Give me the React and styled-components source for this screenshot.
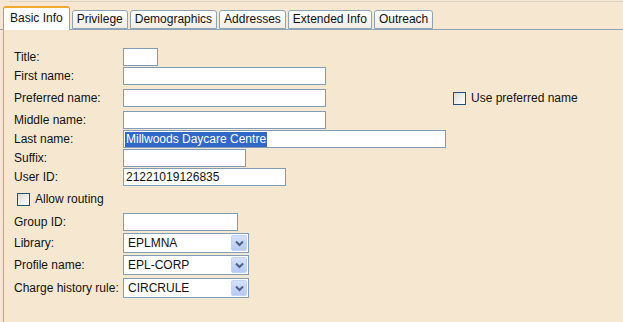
import React from 'react';
import styled, { createGlobalStyle } from 'styled-components';

const GlobalStyle = createGlobalStyle`
  html, body {
    margin: 0;
    padding: 0;
    background: #f6e8d0;
  }
  body {
    font-family: 'Liberation Sans', Arial, sans-serif;
    font-size: 12px;
    color: #111;
  }
`;

const Screen = styled.div`
  width: 623px;
  height: 322px;
  overflow: hidden;
  background: #f6e8d0;
  display: flex;
  flex-direction: column;
`;

const TopRule = styled.div`
  height: 1px;
  margin: 1px 0 0 9px;
  background: #dcd3c3;
`;

const TabBar = styled.div`
  display: flex;
  align-items: flex-end;
  gap: 2px;
  margin-top: 5px;
  padding-left: 3px;
  border-bottom: 1px solid #8fa3b6;
  height: 22px;
`;

const Tab = styled.div`
  box-sizing: border-box;
  height: ${({ active }) => (active ? '24px' : '19px')};
  margin-bottom: ${({ active }) => (active ? '-1px' : '0')};
  padding: ${({ active }) => (active ? '3px 6px 0' : '1px 4px 0')};
  border: 1px solid #8fa3b6;
  border-bottom: ${({ active }) => (active ? 'none' : '1px solid #8fa3b6')};
  border-top: ${({ active }) => (active ? '2px solid #f0a830' : '1px solid #8fa3b6')};
  border-radius: 3px 3px 0 0;
  background: ${({ active }) =>
    active ? '#ffffff' : 'linear-gradient(#ffffff, #f1ede4)'};
  font-size: 12px;
  line-height: 15px;
  white-space: nowrap;
`;

const Panel = styled.div`
  flex: 1;
  margin-left: 3px;
  border-left: 1px solid #a0aab4;
  padding: 18px 0 0 10px;
  display: flex;
  flex-direction: column;
`;

const Row = styled.div`
  display: flex;
  align-items: center;
  margin-top: ${({ gap }) => gap || 0}px;
`;

const Label = styled.span`
  width: 109px;
  flex: none;
`;

const TextField = styled.div`
  box-sizing: border-box;
  width: ${({ w }) => w}px;
  height: 18px;
  border: 1px solid #7f9db9;
  background: #ffffff;
  padding: 0 2px;
  display: flex;
  align-items: center;
  white-space: nowrap;
`;

const Selected = styled.span`
  background: #3168c8;
  color: #ffffff;
  margin-left: -1px;
  padding: 0 1px;
  line-height: 15px;
`;

const Select = styled.div`
  box-sizing: border-box;
  width: 126px;
  height: 20px;
  border: 1px solid #7f9db9;
  background: #ffffff;
  display: flex;
  align-items: center;
  justify-content: space-between;
  padding: 0 1px 0 4px;
`;

const ArrowButton = styled.div`
  width: 16px;
  height: 16px;
  box-sizing: border-box;
  border-radius: 2px;
  background: linear-gradient(#d6e2fc, #b6c9f5);
  border: 1px solid #c3d3f7;
  display: flex;
  align-items: center;
  justify-content: center;
`;

const Check = styled.label`
  display: flex;
  align-items: center;
  gap: 5px;
`;

const Box = styled.span`
  width: 13px;
  height: 13px;
  box-sizing: border-box;
  border: 1px solid #1c5180;
  background: linear-gradient(135deg, #dcdcd6, #ffffff);
`;

const Spacer = styled.div`
  width: ${({ w }) => w}px;
`;

const Chevron = () => (
  <svg width="9" height="7" viewBox="0 0 9 7">
    <path d="M1 1.5 L4.5 5 L8 1.5" fill="none" stroke="#4d6185" strokeWidth="2" />
  </svg>
);

const tabs = ['Basic Info', 'Privilege', 'Demographics', 'Addresses', 'Extended Info', 'Outreach'];

const App = () => (
  <Screen>
    <GlobalStyle />
    <TopRule />
    <TabBar>
      {tabs.map((t, i) => (
        <Tab key={t} active={i === 0}>{t}</Tab>
      ))}
    </TabBar>
    <Panel>
      <Row>
        <Label>Title:</Label>
        <TextField w={35} />
      </Row>
      <Row gap={1}>
        <Label>First name:</Label>
        <TextField w={203} />
      </Row>
      <Row gap={4}>
        <Label>Preferred name:</Label>
        <TextField w={203} />
        <Spacer w={127} />
        <Check><Box />Use preferred name</Check>
      </Row>
      <Row gap={4}>
        <Label>Middle name:</Label>
        <TextField w={203} />
      </Row>
      <Row gap={1}>
        <Label>Last name:</Label>
        <TextField w={323}><Selected>Millwoods Daycare Centre</Selected></TextField>
      </Row>
      <Row gap={1}>
        <Label>Suffix:</Label>
        <TextField w={123} />
      </Row>
      <Row gap={1}>
        <Label>User ID:</Label>
        <TextField w={163}>21221019126835</TextField>
      </Row>
      <Row gap={6}>
        <Spacer w={3} />
        <Check><Box />Allow routing</Check>
      </Row>
      <Row gap={7}>
        <Label>Group ID:</Label>
        <TextField w={115} />
      </Row>
      <Row gap={2}>
        <Label>Library:</Label>
        <Select>EPLMNA<ArrowButton><Chevron /></ArrowButton></Select>
      </Row>
      <Row gap={2}>
        <Label>Profile name:</Label>
        <Select>EPL-CORP<ArrowButton><Chevron /></ArrowButton></Select>
      </Row>
      <Row gap={3}>
        <Label>Charge history rule:</Label>
        <Select>CIRCRULE<ArrowButton><Chevron /></ArrowButton></Select>
      </Row>
    </Panel>
  </Screen>
);

export default App;
